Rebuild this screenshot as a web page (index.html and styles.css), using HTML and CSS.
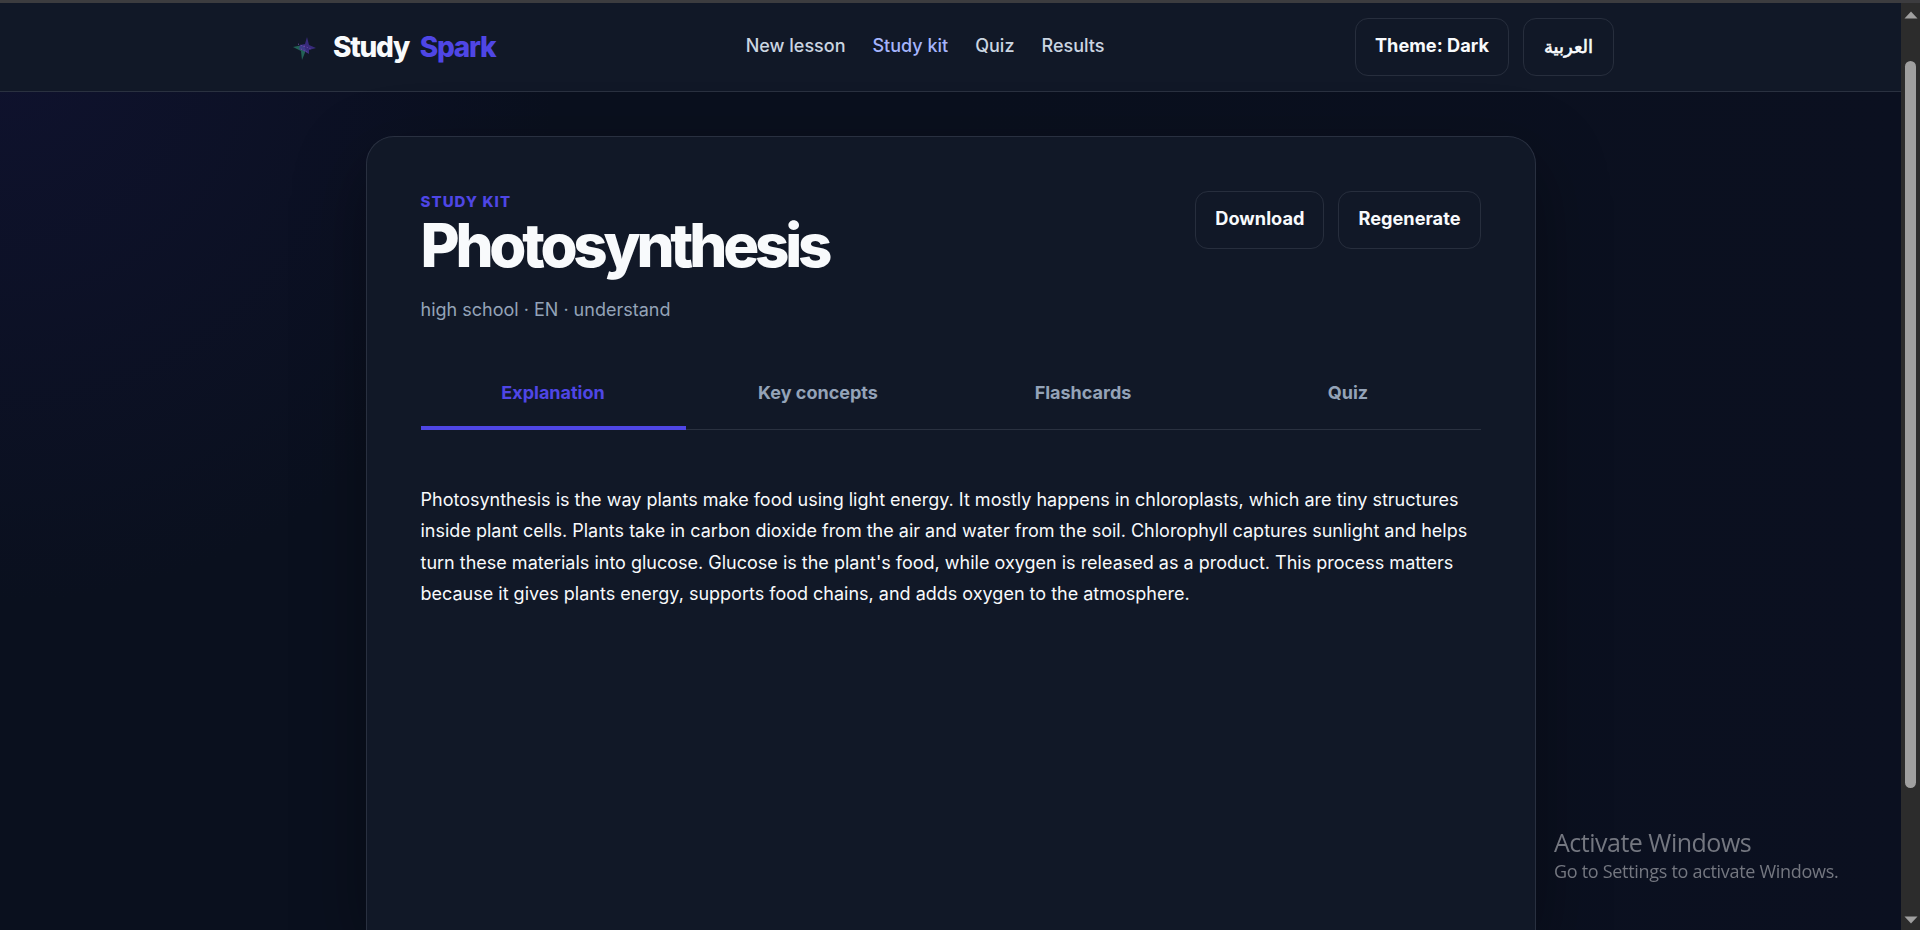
FILE: index.html
```
<!DOCTYPE html>
<html lang="en">
<head>
  <meta charset="UTF-8">
  <meta name="viewport" content="width=device-width, initial-scale=1.0">
  <title>Study Spark</title>
  <link rel="stylesheet" href="styles.css">
</head>
<body>
  <div class="window">
    <div class="page">
      <header class="site-header">
        <div class="header-inner">
          <a class="brand" href="#">
            <svg class="brand-mark" viewBox="0 0 36 36" aria-hidden="true">
              <path fill="#26705f" d="M6 18L16 16L19 21L15 31L14 22Z" opacity=".85"/>
              <path fill="#45329a" d="M13 16L18 15L20 8L22 16L29 19L22 21L22 25L17 22L12 20Z" opacity=".75"/>
              <path fill="none" stroke="#7c4bb0" stroke-width="1" stroke-dasharray="1 2" d="M11 15L18 18M14 20L22 24M17 17L24 20"/>
            </svg>
            <span class="brand-name">Study <span class="accent">Spark</span></span>
          </a>
          <nav class="nav">
            <a href="#">New lesson</a>
            <a href="#" class="active">Study kit</a>
            <a href="#">Quiz</a>
            <a href="#">Results</a>
          </nav>
          <div class="actions">
            <button class="btn">Theme: Dark</button>
            <button class="btn btn-lang" lang="ar">العربية</button>
          </div>
        </div>
      </header>

      <main class="card">
        <div class="card-head">
          <div>
            <p class="eyebrow">STUDY KIT</p>
            <h1>Photosynthesis</h1>
            <p class="meta">high school · EN · understand</p>
          </div>
          <div class="actions">
            <button class="btn">Download</button>
            <button class="btn">Regenerate</button>
          </div>
        </div>

        <div class="tabs">
          <button class="tab active">Explanation</button>
          <button class="tab">Key concepts</button>
          <button class="tab">Flashcards</button>
          <button class="tab">Quiz</button>
        </div>

        <p class="explanation">Photosynthesis is the way plants make food using light energy. It mostly happens in chloroplasts, which are tiny structures inside plant cells. Plants take in carbon dioxide from the air and water from the soil. Chlorophyll captures sunlight and helps turn these materials into glucose. Glucose is the plant's food, while oxygen is released as a product. This process matters because it gives plants energy, supports food chains, and adds oxygen to the atmosphere.</p>
      </main>
    </div>

    <div class="scrollbar">
      <svg class="arrow" viewBox="0 0 14 8"><path d="M0.5 7.5L7 0.5L13.5 7.5Z"/></svg>
      <div class="track"><div class="thumb"></div></div>
      <svg class="arrow" viewBox="0 0 14 8"><path d="M0.5 0.5L7 7.5L13.5 0.5Z"/></svg>
    </div>
  </div>

  <div class="watermark">
    <div class="watermark-title">Activate Windows</div>
    <div class="watermark-text">Go to Settings to activate Windows.</div>
  </div>
</body>
</html>
```
FILE: styles.css
```
* {
  box-sizing: border-box;
}

body {
  margin: 0;
  height: 100vh;
  overflow: hidden;
  background: #0a101e;
  color: #f8fafc;
  font-family: Inter, "Noto Sans", sans-serif;
  font-size: 18px;
}

p, h1 {
  margin: 0;
}

a {
  color: inherit;
  text-decoration: none;
}

button {
  font-family: inherit;
  font-size: inherit;
  color: inherit;
  background: none;
  border: none;
  cursor: pointer;
}

.window {
  display: flex;
  height: 100vh;
  border-top: 3px solid #3c3c3f;
}

.page {
  flex: 1;
  display: flex;
  flex-direction: column;
  overflow: hidden;
  background:
    radial-gradient(circle at 0 40px, #0f122e 0, rgba(15, 18, 46, 0) 560px),
    linear-gradient(90deg, #0a101e 0%, #0a101e 50%, #0b1020 100%);
}

/* Header */
.site-header {
  height: 89px;
  flex-shrink: 0;
  background: #111827;
  border-bottom: 1px solid #2a3140;
}

.header-inner {
  width: 1327px;
  height: 88px;
  margin: 0 auto;
  display: flex;
  align-items: center;
  justify-content: space-between;
}

.brand {
  display: flex;
  align-items: center;
  gap: 10px;
}

.brand-mark {
  width: 36px;
  height: 36px;
}

.brand-name {
  font-size: 28px;
  font-weight: 800;
  letter-spacing: -1.3px;
  word-spacing: 6px;
}

.accent {
  color: #4f46e5;
}

.nav {
  display: flex;
  gap: 27px;
  padding-bottom: 3px;
  color: #cbd5e1;
  font-weight: 500;
}

.nav .active {
  color: #a5b4fc;
}

.actions {
  display: flex;
  gap: 14px;
}

.btn {
  height: 58px;
  padding: 0 19px 4px;
  border: 1px solid #272e3d;
  border-radius: 13px;
  font-size: 18.2px;
  font-weight: 700;
}

.btn-lang {
  width: 91px;
  padding-bottom: 2px;
  font-family: "DejaVu Sans", sans-serif;
  font-size: 18px;
  font-weight: 400;
  -webkit-text-stroke: 0.6px currentColor;
}

/* Study kit card */
.card {
  width: 1170px;
  flex: 1;
  margin: 44px auto 0;
  padding: 54px 54px 0;
  background: #111827;
  border: 1px solid #293040;
  border-bottom: none;
  border-radius: 28px 28px 0 0;
  box-shadow: 0 24px 70px rgba(0, 0, 0, 0.35);
}

.card-head {
  display: flex;
  justify-content: space-between;
  align-items: flex-start;
  height: 166px;
}

.eyebrow {
  color: #4f46e5;
  font-size: 15px;
  font-weight: 800;
  line-height: 22px;
  letter-spacing: 1.05px;
}

h1 {
  font-size: 60px;
  font-weight: 800;
  line-height: 64px;
  letter-spacing: -4.2px;
}

.meta {
  margin-top: 18px;
  color: #94a3b8;
  line-height: 30px;
}

.tabs {
  display: grid;
  grid-template-columns: repeat(4, 1fr);
  height: 73px;
  border-bottom: 1px solid #2a3140;
}

.tab {
  height: 73px;
  padding: 1px 0 0;
  border-bottom: 4px solid transparent;
  color: #94a3b8;
  font-weight: 700;
}

.tab.active {
  color: #4f46e5;
  border-bottom-color: #4f46e5;
}

.explanation {
  margin-top: 54px;
  line-height: 31.45px;
}

/* Scrollbar */
.scrollbar {
  width: 19px;
  padding: 8px 0 6px;
  display: flex;
  flex-direction: column;
  align-items: center;
  background: #2c2c2c;
}

.arrow {
  width: 14px;
  height: 8px;
  fill: #a0a0a0;
}

.track {
  flex: 1;
  padding-top: 42px;
}

.thumb {
  width: 11px;
  height: 727px;
  border-radius: 6px;
  background: #9f9f9f;
}

/* System overlay */
.watermark {
  position: fixed;
  left: 1554px;
  top: 825px;
  color: #747780;
  font-family: "Open Sans", sans-serif;
}

.watermark-title {
  font-size: 25px;
  line-height: 34px;
  letter-spacing: -0.5px;
}

.watermark-text {
  font-size: 18px;
  line-height: 25px;
  letter-spacing: -0.3px;
}
```
